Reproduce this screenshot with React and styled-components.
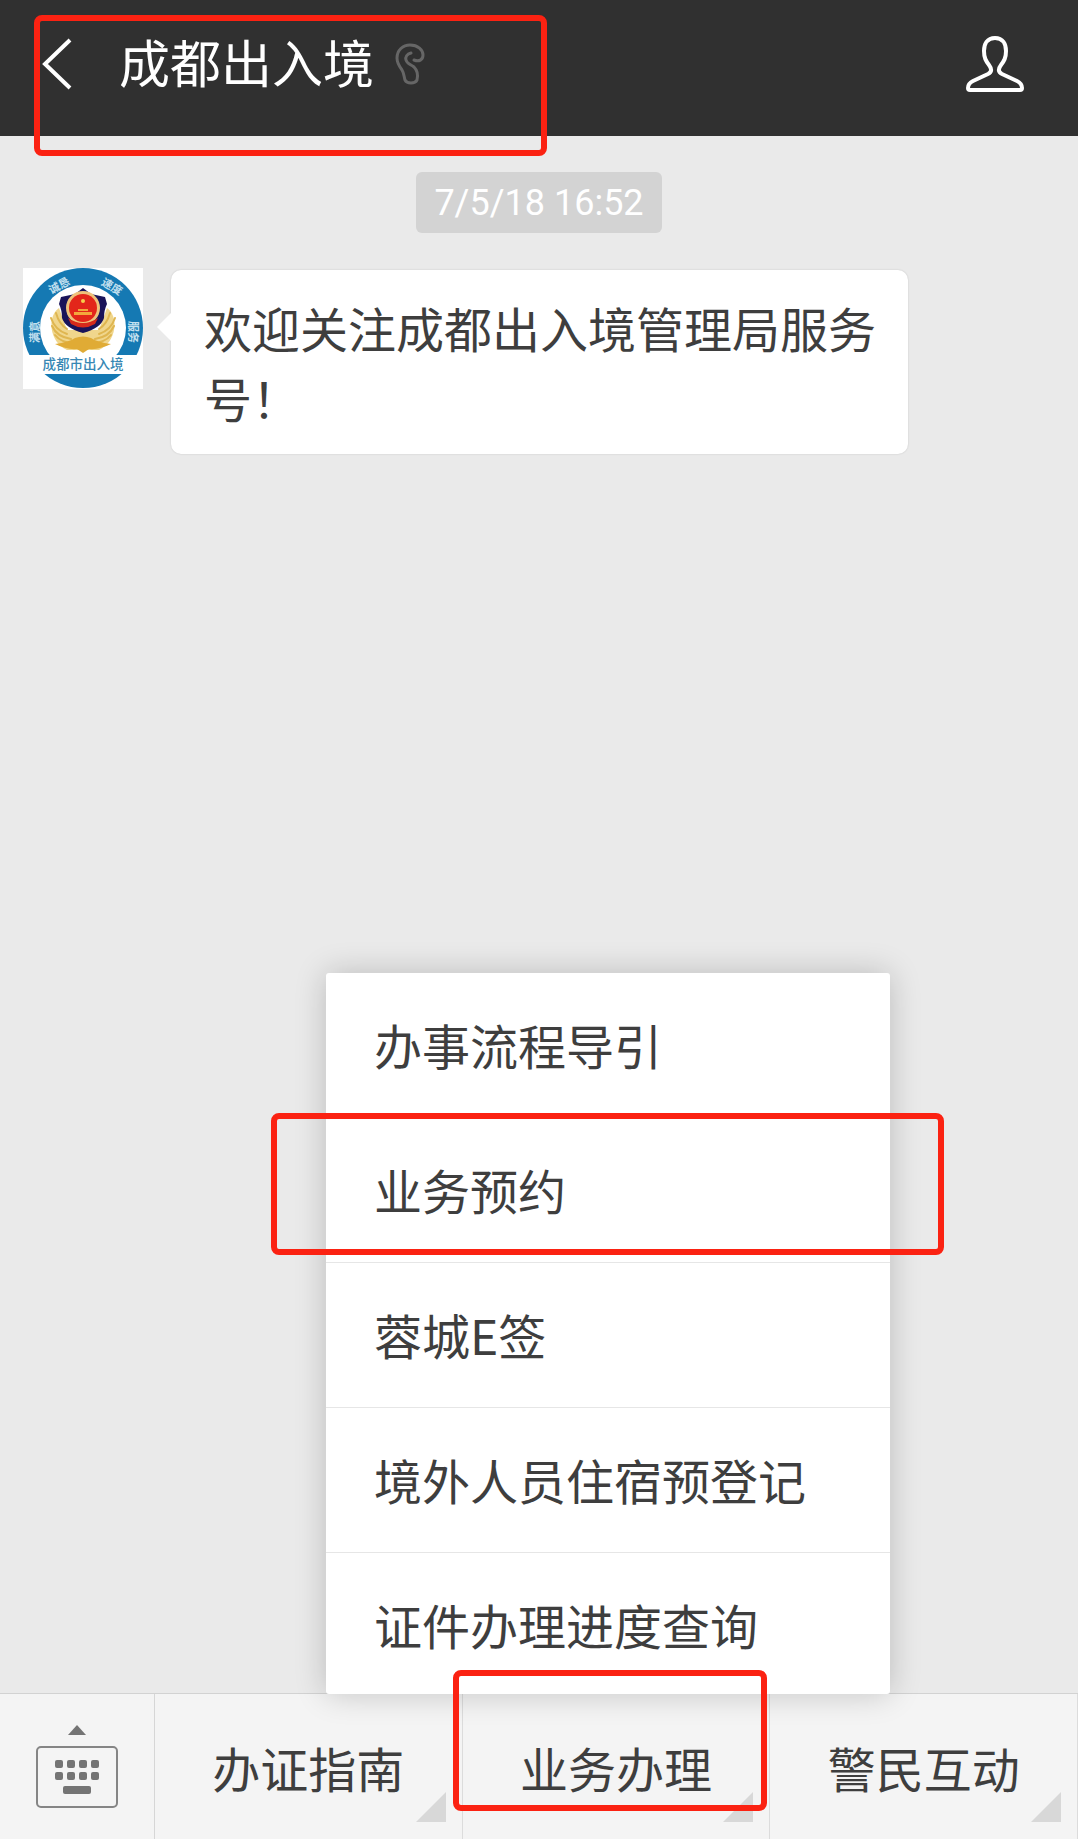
import React from "react";
import styled, { createGlobalStyle } from "styled-components";

const GlobalStyle = createGlobalStyle`
  *, *::before, *::after { box-sizing: border-box; }
  body {
    margin: 0;
    background: #eaeaea;
    font-family: "Noto Sans CJK SC", sans-serif;
  }
  button {
    margin: 0;
    padding: 0;
    border: 0;
    background: none;
    font: inherit;
    color: inherit;
    cursor: pointer;
  }
`;

const Screen = styled.div`
  display: flex;
  flex-direction: column;
  min-height: 100vh;
  color: #3e3e3e;
`;

const Highlight = styled.span`
  position: absolute;
  z-index: 3;
  top: ${(p) => p.$top}px;
  right: ${(p) => p.$right}px;
  bottom: ${(p) => p.$bottom}px;
  left: ${(p) => p.$left}px;
  border: 6px solid #fb2212;
  border-radius: 8px;
  pointer-events: none;
`;

const Header = styled.header`
  display: flex;
  align-items: flex-start;
  justify-content: space-between;
  height: 136px;
  padding: 0 54px 0 42px;
  background: #303030;
  color: #fff;
`;

const Heading = styled.div`
  position: relative;
  display: flex;
  align-items: center;
  height: 128px;
`;

const IconButton = styled.button`
  display: flex;
  align-items: center;
  height: 128px;
`;

const Title = styled.h1`
  margin: 0 21px 0 47px;
  padding-bottom: 6px;
  font-size: 51px;
  line-height: 74px;
  font-weight: 400;
`;

const Chat = styled.main`
  display: flex;
  flex: 1;
  flex-direction: column;
  padding: 36px 23px;
  background: #eaeaea;
`;

const Timestamp = styled.time`
  align-self: center;
  padding: 2px 18px 0;
  border-radius: 6px;
  background: #d3d3d3;
  color: #fff;
  font-family: Roboto, sans-serif;
  font-size: 36px;
  line-height: 59px;
`;

const Message = styled.div`
  display: flex;
  align-items: flex-start;
  gap: 28px;
  margin-top: 35px;
`;

const Bubble = styled.p`
  position: relative;
  max-width: 737px;
  margin: 2px 0 0;
  padding: 22px 32px 22px 33px;
  border-radius: 10px;
  background: #fff;
  box-shadow: 0 0 2px rgba(0, 0, 0, 0.16);
  font-size: 48px;
  line-height: 70px;

  &::before {
    content: "";
    position: absolute;
    top: 43px;
    left: -14px;
    border: solid transparent;
    border-width: 14px 14px 14px 0;
    border-right-color: #fff;
  }
`;

const Toolbar = styled.nav`
  display: flex;
  height: 146px;
  border-top: 1px solid #d2d2d2;
  background: #f4f4f4;
`;

const KeyboardButton = styled.button`
  display: flex;
  flex: 0 0 155px;
  justify-content: center;
  padding-top: 31px;
  border-right: 1px solid #d6d6d6;
`;

const Tab = styled.div`
  position: relative;
  flex: 1;
  border-right: 1px solid #dcdcdc;
`;

const TabButton = styled.button`
  width: 100%;
  height: 100%;
  font-size: 48px;
  line-height: 70px;

  &::after {
    content: "";
    position: absolute;
    right: 16px;
    bottom: 17px;
    border: 15px solid;
    border-color: transparent #d8d8d8 #d8d8d8 transparent;
  }
`;

const Menu = styled.ul`
  position: absolute;
  z-index: 2;
  bottom: 100%;
  left: calc(50% - 290px);
  width: 564px;
  margin: 0;
  padding: 0;
  border-radius: 3px;
  background: #fff;
  box-shadow: 0 0 32px rgba(0, 0, 0, 0.2);
  list-style: none;
`;

const MenuItem = styled.li`
  position: relative;
  border-bottom: 1px solid #e6e6e6;

  &:last-child {
    border-bottom: 0;
  }
`;

const MenuButton = styled.button`
  display: block;
  width: 100%;
  padding: 36px 48px 38px;
  font-size: 48px;
  line-height: 70px;
  text-align: left;

  ${MenuItem}:last-child & {
    padding-bottom: 35px;
  }
`;

const BackIcon = () => (
  <svg width="30" height="52" viewBox="0 0 30 52" fill="none" stroke="#fff" strokeWidth="4">
    <path d="M28 2 3 26 28 50" />
  </svg>
);

const EarIcon = () => (
  <svg width="30" height="42" viewBox="0 0 30 42" fill="none" stroke="#666" strokeWidth="3" strokeLinecap="round">
    <path d="M16 10C12 11 10 14 11 17C12 21 15 21 19 24C23 28 23 33 22 37C20 41 12 41 10 37C9 34 9 30 7 27C4 23 2 20 2 15C2 7 8 2 15 2C23 2 28 7 28 12C28 17 24 19 19 17" />
  </svg>
);

const PersonIcon = () => (
  <svg width="58" height="56" viewBox="0 0 58 56" fill="none" stroke="#fff" strokeWidth="4" strokeLinejoin="round">
    <path d="M29 2C21 2 18 8 18 15C18 22 20 25 23 29C26 33 26 36 22 38L7 45C3 47 2 49 2 52Q2 54 4 54H54Q56 54 56 52C56 49 55 47 51 45L36 38C32 36 32 33 35 29C38 25 40 22 40 15C40 8 37 2 29 2Z" />
  </svg>
);

const KeyboardIcon = () => (
  <svg width="82" height="84" viewBox="0 0 82 84" fill="#747474">
    <path d="M32 10 41 0 50 10Z" />
    <rect x="1" y="22" width="80" height="60" rx="4" fill="none" stroke="#858585" strokeWidth="2" />
    {[19, 31, 43, 55].map((x) => (
      <React.Fragment key={x}>
        <rect x={x} y="35" width="8" height="8" rx="2" />
        <rect x={x} y="47" width="8" height="8" rx="2" />
      </React.Fragment>
    ))}
    <rect x="27" y="61" width="28" height="8" rx="2" />
  </svg>
);

const EmblemSvg = styled.svg`
  flex: none;
`;

const Emblem = () => (
  <EmblemSvg width="120" height="121" viewBox="0 0 120 121" role="img" aria-label="成都市出入境">
    <rect width="120" height="121" fill="#fff" />
    <circle cx="60" cy="60" r="60" fill="#1579b3" />
    <circle cx="60" cy="60" r="43" fill="#fff" />
    <path d="M0 87H120V106H0Z" fill="#fff" />
    <path d="M36 40C24 48 26 74 44 82H76C94 74 96 48 84 40L76 62H44Z" fill="#f0d68c" />
    <g fill="none" stroke="#dfb650" strokeWidth="2" strokeLinecap="round">
      <path d="M28 50Q32 62 44 66M29 58Q34 69 48 71M32 67Q38 75 52 75M92 50Q88 62 76 66M91 58Q86 69 72 71M88 67Q82 75 68 75M33 45Q36 56 44 61M87 45Q84 56 76 61" />
    </g>
    <path d="M32 76Q46 74 52 70Q60 67 68 70Q74 74 88 76Q76 82 66 81L60 85 54 81Q44 82 32 76Z" fill="#e0ab35" />
    <path d="M60 20 68 26 82 29 84 36Q81 42 81 50Q78 60 60 65Q42 60 39 50Q39 42 36 36L38 29 52 26Z" fill="#1a1459" />
    <circle cx="60" cy="40" r="17" fill="#efc27a" />
    <circle cx="60" cy="40" r="14" fill="#e3261a" />
    <path d="M51 44H69V47H51ZM55 41H65V43H55Z" fill="#f3a73c" />
    <circle cx="60" cy="33" r="2" fill="#f7cf4a" />
    <path d="M45 50Q60 60 75 50L72 56Q60 63 48 56Z" fill="#d62a1b" />
    <g fill="#c3e0ef" fontSize="11" fontWeight="700" textAnchor="middle">
      <text transform="translate(38 21) rotate(-28)">诚恳</text>
      <text transform="translate(87 22) rotate(30)">速度</text>
      <text transform="translate(16 64) rotate(-90)">满意</text>
      <text transform="translate(106 64) rotate(90)">服务</text>
    </g>
    <text x="60" y="101" fill="#3787b4" fontSize="13.5" fontWeight="500" textAnchor="middle">成都市出入境</text>
  </EmblemSvg>
);

const menuItems = ["办事流程导引", "业务预约", "蓉城E签", "境外人员住宿预登记", "证件办理进度查询"];

export default function App() {
  return (
    <Screen>
      <GlobalStyle />
      <Header>
        <Heading>
          <IconButton aria-label="返回">
            <BackIcon />
          </IconButton>
          <Title>成都出入境</Title>
          <EarIcon />
          <Highlight $top={15} $right={-122} $bottom={-28} $left={-8} />
        </Heading>
        <IconButton aria-label="账号信息">
          <PersonIcon />
        </IconButton>
      </Header>
      <Chat>
        <Timestamp>7/5/18 16:52</Timestamp>
        <Message>
          <Emblem />
          <Bubble>欢迎关注成都出入境管理局服务号！</Bubble>
        </Message>
      </Chat>
      <Toolbar>
        <KeyboardButton aria-label="键盘">
          <KeyboardIcon />
        </KeyboardButton>
        <Tab>
          <TabButton>办证指南</TabButton>
        </Tab>
        <Tab>
          <TabButton aria-expanded="true">业务办理</TabButton>
          <Menu>
            {menuItems.map((label) => (
              <MenuItem key={label}>
                <MenuButton>{label}</MenuButton>
                {label === "业务预约" && <Highlight $top={-5} $right={-54} $bottom={7} $left={-55} />}
              </MenuItem>
            ))}
          </Menu>
          <Highlight $top={-24} $right={2} $bottom={28} $left={-10} />
        </Tab>
        <Tab>
          <TabButton>警民互动</TabButton>
        </Tab>
      </Toolbar>
    </Screen>
  );
}
